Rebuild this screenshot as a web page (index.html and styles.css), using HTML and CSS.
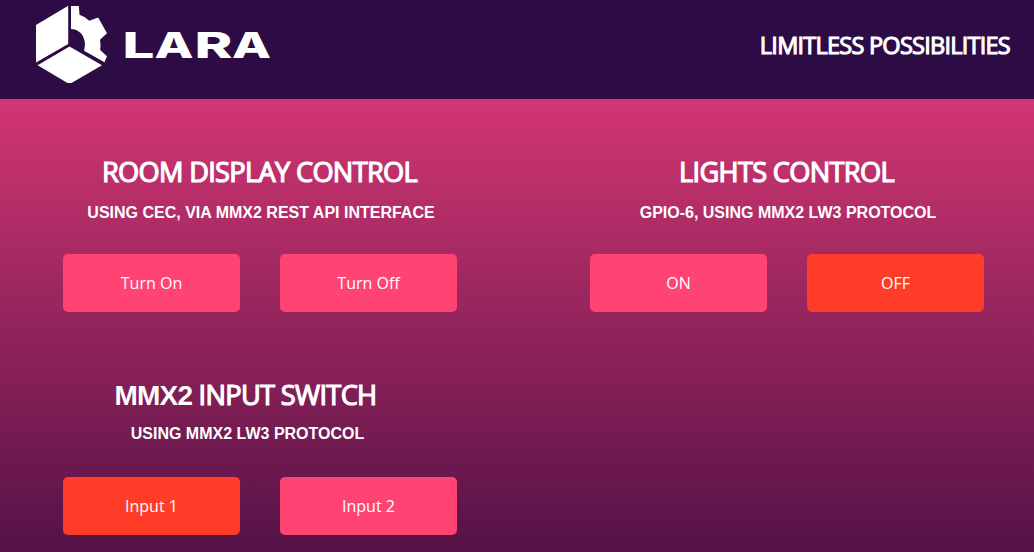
FILE: index.html
```html
<!DOCTYPE html>
<html lang="en">
<head>
    <meta charset="UTF-8">
    <meta name="viewport" content="width=device-width, initial-scale=1.0">
    <title>LARA Room Control</title>
    <link rel="stylesheet" href="styles.css">
</head>
<body>
    <header class="header">
        <svg class="logo" width="240" height="84" viewBox="32 0 240 84">
            <!-- cube -->
            <path d="M36 25 L68.2 5.8 V44 L36 62.5 Z"/>
            <path d="M69.5 46.5 L102 65.2 L71.5 83 H67.5 L37.6 65.2 Z"/>
            <!-- gear -->
            <path d="M71 6 H78.8 L79.5 14.7 Q85 16.5 89.3 20.7 L98.2 17.6 L107 33.2 L100 39.7 Q101 45 100.2 50 L107 56.3 L104.5 62.2 L84 50.7 C87.5 40 81.5 29 71 29 Z"/>
            <g class="logo-text">
                <text x="122.5" y="57.8" textLength="32" lengthAdjust="spacingAndGlyphs">L</text>
                <text x="154.5" y="57.8" textLength="39" lengthAdjust="spacingAndGlyphs">A</text>
                <text x="194.5" y="57.8" textLength="38" lengthAdjust="spacingAndGlyphs">R</text>
                <text x="232" y="57.8" textLength="39" lengthAdjust="spacingAndGlyphs">A</text>
            </g>
        </svg>
        <div class="slogan">LIMITLESS POSSIBILITIES</div>
    </header>
    <main class="panels">
        <section class="panel">
            <h2>ROOM DISPLAY CONTROL</h2>
            <p>USING CEC, VIA MMX2 REST API INTERFACE</p>
            <div class="buttons">
                <button>Turn On</button>
                <button>Turn Off</button>
            </div>
        </section>
        <section class="panel">
            <h2>LIGHTS CONTROL</h2>
            <p>GPIO-6, USING MMX2 LW3 PROTOCOL</p>
            <div class="buttons">
                <button>ON</button>
                <button class="active">OFF</button>
            </div>
        </section>
        <section class="panel input-switch">
            <h2><span>MMX2</span> INPUT SWITCH</h2>
            <p>USING MMX2 LW3 PROTOCOL</p>
            <div class="buttons">
                <button class="active">Input 1</button>
                <button>Input 2</button>
            </div>
        </section>
    </main>
</body>
</html>
```
FILE: styles.css
```css
* {
    box-sizing: border-box;
}
body {
    margin: 0;
    color: white;
    font-family: "Open Sans", sans-serif;
    background: #541246;
}
.header {
    display: flex;
    justify-content: space-between;
    height: 99px;
    padding: 0 24px 0 32px;
    background-color: #2d0b44;
}
.logo {
    fill: white;
}
.logo-text {
    font-family: Inter, sans-serif;
    font-size: 36px;
    font-weight: 800;
}
.slogan {
    font-size: 23.5px;
    line-height: 90px;
    letter-spacing: -0.75px;
    -webkit-text-stroke: 1.1px white;
}
.panels {
    display: grid;
    grid-template-columns: 394px 394px;
    gap: 63px 133px;
    align-content: start;
    height: 453px;
    padding: 53px 0 0 63px;
    background: linear-gradient(#d23672, #541246);
}
.panel {
    height: 160px;
    text-align: center;
}
h2 {
    height: 40px;
    margin: 0;
    padding-right: 1px;
    font-size: 27.2px;
    font-weight: normal;
    line-height: 40px;
    letter-spacing: -0.68px;
    white-space: nowrap;
    -webkit-text-stroke: 1.2px white;
}
h2 span {
    font-family: "Liberation Sans", Arial, sans-serif;
    font-size: 28px;
    font-weight: bold;
    letter-spacing: -0.8px;
    line-height: 1;
    -webkit-text-stroke: 0;
}
p {
    height: 20px;
    margin: 11px 0 0;
    padding-left: 2px;
    font-family: "Liberation Sans", Arial, sans-serif;
    font-size: 16px;
    font-weight: bold;
    line-height: 20px;
}
.input-switch h2 {
    padding-right: 29px;
}
.input-switch p {
    margin-top: 9px;
    padding-right: 27px;
}
.buttons {
    display: flex;
    gap: 40px;
    margin-top: 31px;
}
.input-switch .buttons {
    margin-top: 33px;
}
button {
    width: 177px;
    height: 58px;
    border: none;
    border-radius: 5px;
    background-color: #ff4474;
    color: white;
    font-family: "Open Sans", sans-serif;
    font-size: 16px;
    cursor: pointer;
}
button.active {
    background-color: #ff3c28;
}
```
